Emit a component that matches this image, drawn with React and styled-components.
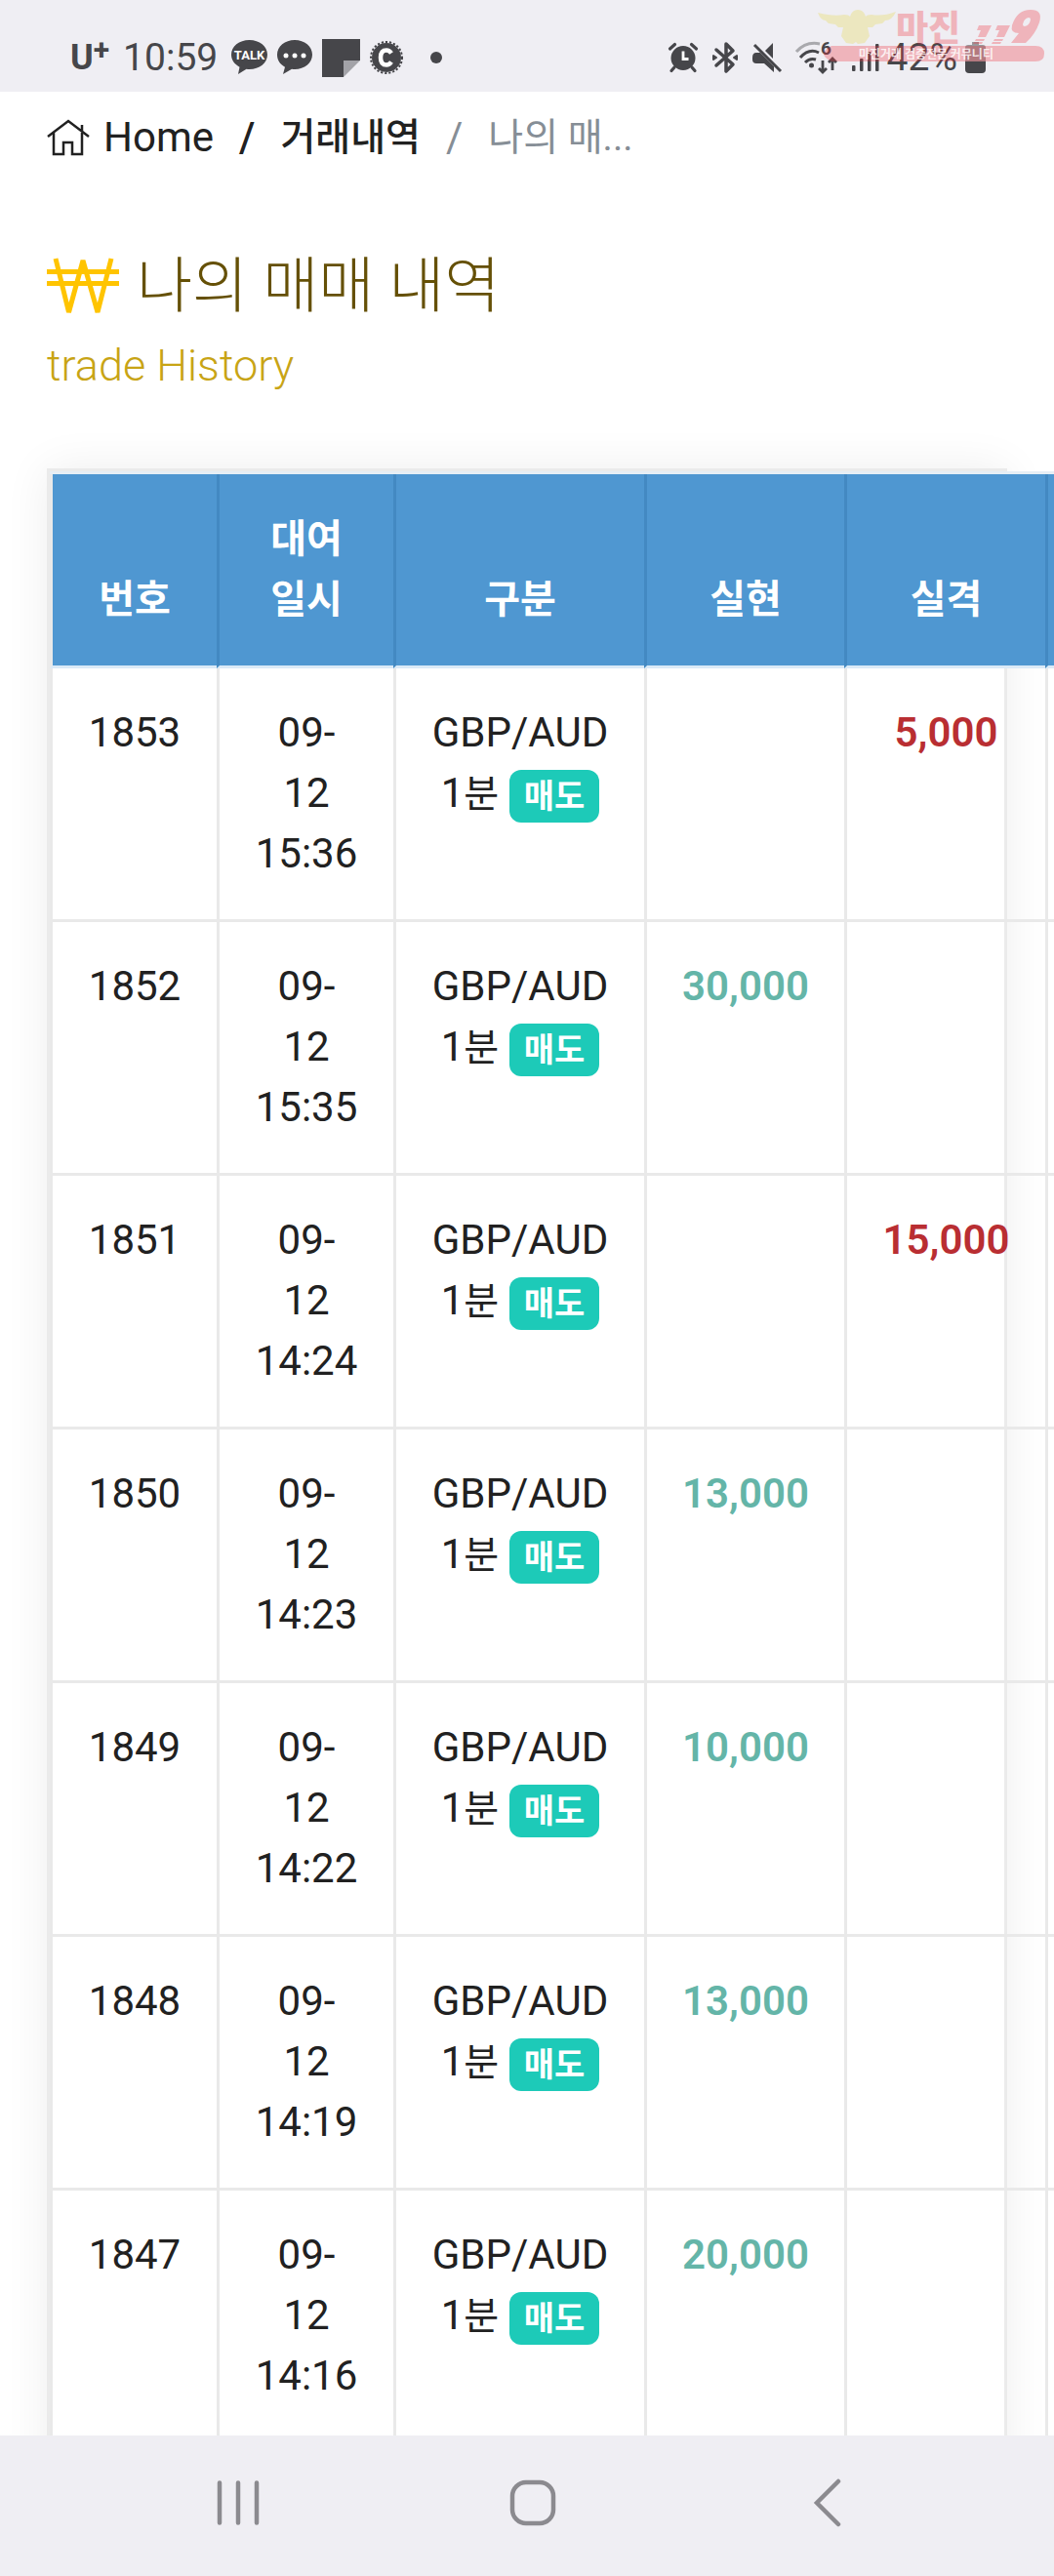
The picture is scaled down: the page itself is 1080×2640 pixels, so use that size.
import React from "react";
import styled, { createGlobalStyle } from "styled-components";

const sans = `Roboto, "Noto Sans CJK KR", sans-serif`;
const ink = "#46464a";

const GlobalStyle = createGlobalStyle`
  * { box-sizing: border-box; }
  body { margin: 0; background: #fff; font-family: ${sans}; color: #212121; }
  svg { overflow: visible; flex: none; }
`;

const Screen = styled.div`
  height: 100vh;
  display: grid;
  grid-template-rows: auto minmax(0, 1fr) auto;
  grid-template-columns: minmax(0, 1fr);
  overflow: hidden;
`;

const StatusBar = styled.header`
  position: relative;
  display: flex;
  justify-content: space-between;
  align-items: center;
  height: 94px;
  padding: 24px 70px 0 72px;
  background: #efeef3;
  color: ${ink};
  font-size: 39px;
  line-height: 46px;
`;

const StatusGroup = styled.div`
  display: flex;
  align-items: center;
  gap: ${(p) => p.$gap}px;
`;

const Carrier = styled.span`
  display: flex;
  align-items: center;
  font-weight: 700;
  font-size: 36px;
  margin-right: 4px;
  sup {
    font-size: 30px;
    line-height: 30px;
    align-self: flex-start;
  }
`;

const Clock = styled.time`
  margin-right: 4px;
`;

const Watermark = styled.div`
  position: absolute;
  top: 9px;
  right: 8px;
  line-height: 0;
`;

const Main = styled.main`
  overflow: hidden;
  padding: 25px 48px 0;
`;

const Breadcrumb = styled.ol`
  display: flex;
  align-items: center;
  margin: 0;
  padding: 0;
  list-style: none;
  font-size: 42px;
  line-height: 44px;
`;

const Crumb = styled.li`
  display: flex;
  align-items: center;
  color: ${(p) => (p.$muted ? "#868e96" : "#212121")};
  font-size: ${(p) => (p.$korean ? 39 : 42)}px;
  font-weight: ${(p) => (p.$strong ? 500 : 400)};
  &:not(:first-child)::before {
    content: "/";
    font-size: 42px;
    padding: 0 26px;
  }
`;

const CrumbLink = styled.a`
  display: flex;
  align-items: center;
  gap: 14px;
  color: inherit;
  text-decoration: none;
`;

const Heading = styled.div`
  margin-top: 86px;
`;

const Title = styled.h1`
  display: flex;
  align-items: center;
  gap: 18px;
  margin: 0;
  color: #655006;
  font-size: 62px;
  font-weight: 300;
  line-height: 90px;
`;

const Subtitle = styled.p`
  margin: 0;
  color: #c8a415;
  font-size: 45px;
  font-weight: 300;
  line-height: 72px;
`;

const Card = styled.section`
  margin-top: 69px;
  padding-bottom: 80px;
  border: 3px solid #ebebeb;
  background: #fff;
  box-shadow: 0 0 44px rgba(0, 0, 0, 0.07);
`;

const Table = styled.table`
  width: 1221px;
  table-layout: fixed;
  border-spacing: 0;
  border-top: 3px solid #e6eef5;
  font-size: 42px;
  line-height: 62px;
  text-align: center;
`;

const HeadCell = styled.th`
  padding: 36px 44px;
  vertical-align: bottom;
  background: #4f97d1;
  color: #fff;
  font-size: 40px;
  font-weight: 700;
  border-left: 3px solid #4389c2;
  border-bottom: 3px solid #dbeaf7;
  background-clip: padding-box;
  &:first-child { border-left-color: #e9e9e9; }
`;

const Cell = styled.td`
  padding: 35px 0 36px;
  vertical-align: top;
  white-space: nowrap;
  border-left: 3px solid #e9e9e9;
  border-bottom: 3px solid #e9e9e9;
  color: ${(p) => p.$color || "#212121"};
  font-weight: ${(p) => (p.$color ? 600 : 400)};
`;

const Unit = styled.span`
  font-size: 39px;
`;

const Badge = styled.span`
  display: inline-block;
  padding: 0 15px;
  border-radius: 12px;
  background: #1dcab8;
  color: #fff;
  font-size: 34px;
  font-weight: 700;
  line-height: 54px;
  vertical-align: middle;
`;

const NavBar = styled.nav`
  display: flex;
  align-items: center;
  justify-content: space-between;
  height: 144px;
  padding: 0 202px 6px 214px;
  background: #efeef3;
`;

const NavButton = styled.button`
  display: flex;
  justify-content: center;
  width: 60px;
  padding: 0;
  border: 0;
  background: none;
`;

const columns = [
  { label: "번호", width: 171 },
  { label: "대여일시", width: 181 },
  { label: "구분", width: 257 },
  { label: "실현", width: 205 },
  { label: "실격", width: 206 },
  { label: "", width: 201 },
];

const trades = [
  { no: 1853, time: "15:36", loss: "5,000" },
  { no: 1852, time: "15:35", gain: "30,000" },
  { no: 1851, time: "14:24", loss: "15,000" },
  { no: 1850, time: "14:23", gain: "13,000" },
  { no: 1849, time: "14:22", gain: "10,000" },
  { no: 1848, time: "14:19", gain: "13,000" },
  { no: 1847, time: "14:16", gain: "20,000" },
];

const TalkIcon = () => (
  <svg width="37" height="36" viewBox="0 0 37 36">
    <path fill={ink} d="M18.500 0C8 0 0 6.500 0 15c0 5.500 3.500 10 8.500 12.700L7 35l8.500-5.300c1 .2 2 .3 3 .3C29 30 37 23.500 37 15S29 0 18.500 0z" />
    <text x="18.500" y="20" textAnchor="middle" fill="#fff" fontSize="13" fontWeight="700" fontFamily="Roboto, sans-serif">TALK</text>
  </svg>
);

const ChatIcon = () => (
  <svg width="36" height="36" viewBox="0 0 36 36">
    <path fill={ink} d="M18 0C8 0 0 6.500 0 15c0 5.500 3 10 8 12.700L6 35l9-5.200c1 .2 2 .2 3 .2 10 0 18-6.500 18-15S28 0 18 0z" />
    <circle cx="9" cy="16" r="2.500" fill="#fff" />
    <circle cx="18" cy="16" r="2.500" fill="#fff" />
    <circle cx="27" cy="16" r="2.500" fill="#fff" />
  </svg>
);

const NoteIcon = () => (
  <svg width="39" height="39" viewBox="0 0 39 39">
    <path fill={ink} d="M0 0h39v22H22v17H0z" />
    <path fill="#a3a3a8" d="M22 22h17L22 39z" />
  </svg>
);

const CoinIcon = () => (
  <svg width="34" height="36" viewBox="0 0 34 36">
    <circle cx="17" cy="18" r="15" fill={ink} />
    <circle cx="17" cy="18" r="16" fill="none" stroke={ink} strokeWidth="2" strokeDasharray="2.200 1.900" />
    <path d="M22 13.500Q20 10.500 17 10.500Q11 10.500 11 18T17 25.500Q20 25.500 22 22.500" fill="none" stroke="#fff" strokeWidth="4.500" />
  </svg>
);

const Dot = styled.svg`
  margin-left: 18px;
`;

const DotIcon = () => (
  <Dot width="12" height="12" viewBox="0 0 12 12">
    <circle cx="6" cy="6" r="6" fill={ink} />
  </Dot>
);

const AlarmIcon = () => (
  <svg width="30" height="30" viewBox="0 0 30 30">
    <circle cx="15" cy="15.500" r="12.500" fill={ink} />
    <path d="M1.500 6 6.500 1.500M28.500 6 23.500 1.500M6 25l-3 3.500M24 25l3 3.500" stroke={ink} strokeWidth="3.200" strokeLinecap="round" />
    <path d="M15 8.500v8h5.500" fill="none" stroke="#fff" strokeWidth="2.800" />
  </svg>
);

const BluetoothIcon = () => (
  <svg width="28" height="32" viewBox="0 0 28 32" fill="none" stroke={ink} strokeWidth="3.500" strokeLinejoin="round" strokeLinecap="round">
    <path d="M5 8l17 15-7 7V2l7 7L5 24" />
    <path d="M2 14v4l3-2zM26 14v4l-3-2z" fill={ink} strokeWidth="2" />
  </svg>
);

const MuteIcon = () => (
  <svg width="30" height="30" viewBox="0 0 30 30">
    <path fill={ink} d="M0 15q0-5 4-5h4l14 14v6L12 21H4q-4 0-4-4zM13 8l8-8v16z" />
    <path d="M2 2l27 27" stroke={ink} strokeWidth="3" />
  </svg>
);

const WifiIcon = () => (
  <svg width="44" height="34" viewBox="0 0 44 34" fill="none">
    <path d="M1 11Q11 0 25 3" stroke="#a9a9ad" strokeWidth="3" />
    <path d="M5 17Q14 7 24 12M10 22Q15 17 21 19" stroke={ink} strokeWidth="3" />
    <circle cx="16.500" cy="25" r="2.500" fill={ink} />
    <text x="26" y="14" fill={ink} fontSize="19" fontWeight="700" fontFamily="Roboto, sans-serif">6</text>
    <path d="M28 20v12M24 28l4 4 4-4M38 30V18M34 22l4-4 4 4" stroke={ink} strokeWidth="2.800" />
  </svg>
);

const SignalIcon = () => (
  <svg width="28" height="30" viewBox="0 0 28 30" fill={ink}>
    <rect x="0" y="23" width="3.500" height="6" rx="1" />
    <rect x="8" y="16" width="3.500" height="13" rx="1" />
    <rect x="16" y="9" width="3.500" height="20" rx="1" />
    <rect x="24" y="1" width="3.500" height="28" rx="1" />
  </svg>
);

const BatteryIcon = () => (
  <svg width="21" height="32" viewBox="0 0 21 32">
    <path d="M7 0h7v3h4q3 0 3 3v14H0V6q0-3 3-3h4z" fill="#99999d" />
    <path d="M0 20h21v8q0 4-4 4H4q-4 0-4-4z" fill={ink} />
  </svg>
);

const WatermarkLogo = () => (
  <svg width="234" height="56" viewBox="0 0 234 56">
    <g opacity="0.3">
      <path fill="#e6d84a" d="M0 4q16 4 27 2 5 0 6 2 2-7 8-7t8 7q1-2 6-2 12 2 25-3-4 9-11 9l-3 3-7 1-3 3h-5l2 9-5 7-7 1-2-2-3 2-7-1-5-7 2-9h-5l-3-3-7-1-3-3Q3 12 0 4z" />
      <path fill="#f0303c" d="M14 38h209q9 0 9 8t-9 8H14q-8-4-8-8t8-8z" />
      <text x="80" y="33" fill="#f0303c" fontSize="36" fontWeight="900" fontFamily="Noto Sans CJK KR, sans-serif">마진</text>
      <path fill="#f0303c" d="M165 17h13l-6 12h-8l3-7h-4zM162 31h9l-1 2h-9zM160 34h9l-1 2h-9zM184 17h13l-6 12h-8l3-7h-4zM181 31h9l-1 2h-9zM179 34h9l-1 2h-9z" />
      <path fill="#f0303c" fillRule="evenodd" d="M218 1q13 0 9 13-4 12-14 21h-15l8-10q-9 0-7-8 5-16 19-16zM216 9q-5 1-6 7 0 2 2 2 5-1 6-7 0-2-2-2z" />
    </g>
    <text x="42" y="51" fill="#fff" opacity="0.8" fontSize="12" fontWeight="700" fontFamily="Noto Sans CJK KR, sans-serif">마진거래 검증전문 커뮤니티</text>
  </svg>
);

const HomeIcon = () => (
  <svg width="44" height="38" viewBox="0 0 44 38" fill="none" stroke="#212121" strokeWidth="2.500">
    <path d="M1 18 22 2l21 16M7 14v22h10V24h9v12h10V14M36 12V6" />
  </svg>
);

const WonIcon = () => (
  <svg width="74" height="58" viewBox="0 0 74 58" fill="none" stroke="#ffc400" strokeWidth="5">
    <path d="M9 0l13.500 55L37 2l15 53L66 0" strokeLinejoin="bevel" />
    <path d="M0 13.500h74M0 25.500h74" />
  </svg>
);

export default function App() {
  return (
    <Screen>
      <GlobalStyle />
      <StatusBar>
        <StatusGroup $gap={10}>
          <Carrier>U<sup>+</sup></Carrier>
          <Clock>10:59</Clock>
          <TalkIcon />
          <ChatIcon />
          <NoteIcon />
          <CoinIcon />
          <DotIcon />
        </StatusGroup>
        <StatusGroup $gap={14}>
          <AlarmIcon />
          <BluetoothIcon />
          <MuteIcon />
          <WifiIcon />
          <StatusGroup $gap={8}>
            <SignalIcon />
            <span>42%</span>
            <BatteryIcon />
          </StatusGroup>
        </StatusGroup>
        <Watermark><WatermarkLogo /></Watermark>
      </StatusBar>

      <Main>
        <nav aria-label="breadcrumb">
          <Breadcrumb>
            <Crumb><CrumbLink href="#home"><HomeIcon />Home</CrumbLink></Crumb>
            <Crumb $korean $strong><CrumbLink href="#trades">거래내역</CrumbLink></Crumb>
            <Crumb $korean $muted>나의 매...</Crumb>
          </Breadcrumb>
        </nav>

        <Heading>
          <Title><WonIcon />나의 매매 내역</Title>
          <Subtitle>trade History</Subtitle>
        </Heading>

        <Card>
          <Table>
            <colgroup>
              {columns.map((c, i) => <col key={i} style={{ width: c.width }} />)}
            </colgroup>
            <thead>
              <tr>{columns.map((c, i) => <HeadCell key={i} scope="col">{c.label}</HeadCell>)}</tr>
            </thead>
            <tbody>
              {trades.map((t) => (
                <tr key={t.no}>
                  <Cell>{t.no}</Cell>
                  <Cell>09-<br />12<br />{t.time}</Cell>
                  <Cell>GBP/AUD<br />1<Unit>분</Unit> <Badge>매도</Badge></Cell>
                  <Cell $color="#64b5a8">{t.gain}</Cell>
                  <Cell $color="#b92e32">{t.loss}</Cell>
                  <Cell />
                </tr>
              ))}
            </tbody>
          </Table>
        </Card>
      </Main>

      <NavBar>
        <NavButton aria-label="최근 앱">
          <svg width="44" height="46" viewBox="0 0 44 46" stroke="#8b8a8f" strokeWidth="4.500" strokeLinecap="round">
            <path d="M3 2.500v41M22 2.500v41M41 2.500v41" />
          </svg>
        </NavButton>
        <NavButton aria-label="홈">
          <svg width="48" height="48" viewBox="0 0 48 48" fill="none" stroke="#8b8a8f" strokeWidth="4.500">
            <rect x="3" y="3" width="42" height="42" rx="14" />
          </svg>
        </NavButton>
        <NavButton aria-label="뒤로">
          <svg width="28" height="50" viewBox="0 0 28 50" fill="none" stroke="#8b8a8f" strokeWidth="4.500" strokeLinecap="round">
            <path d="M25 3 3 25l22 22" />
          </svg>
        </NavButton>
      </NavBar>
    </Screen>
  );
}
